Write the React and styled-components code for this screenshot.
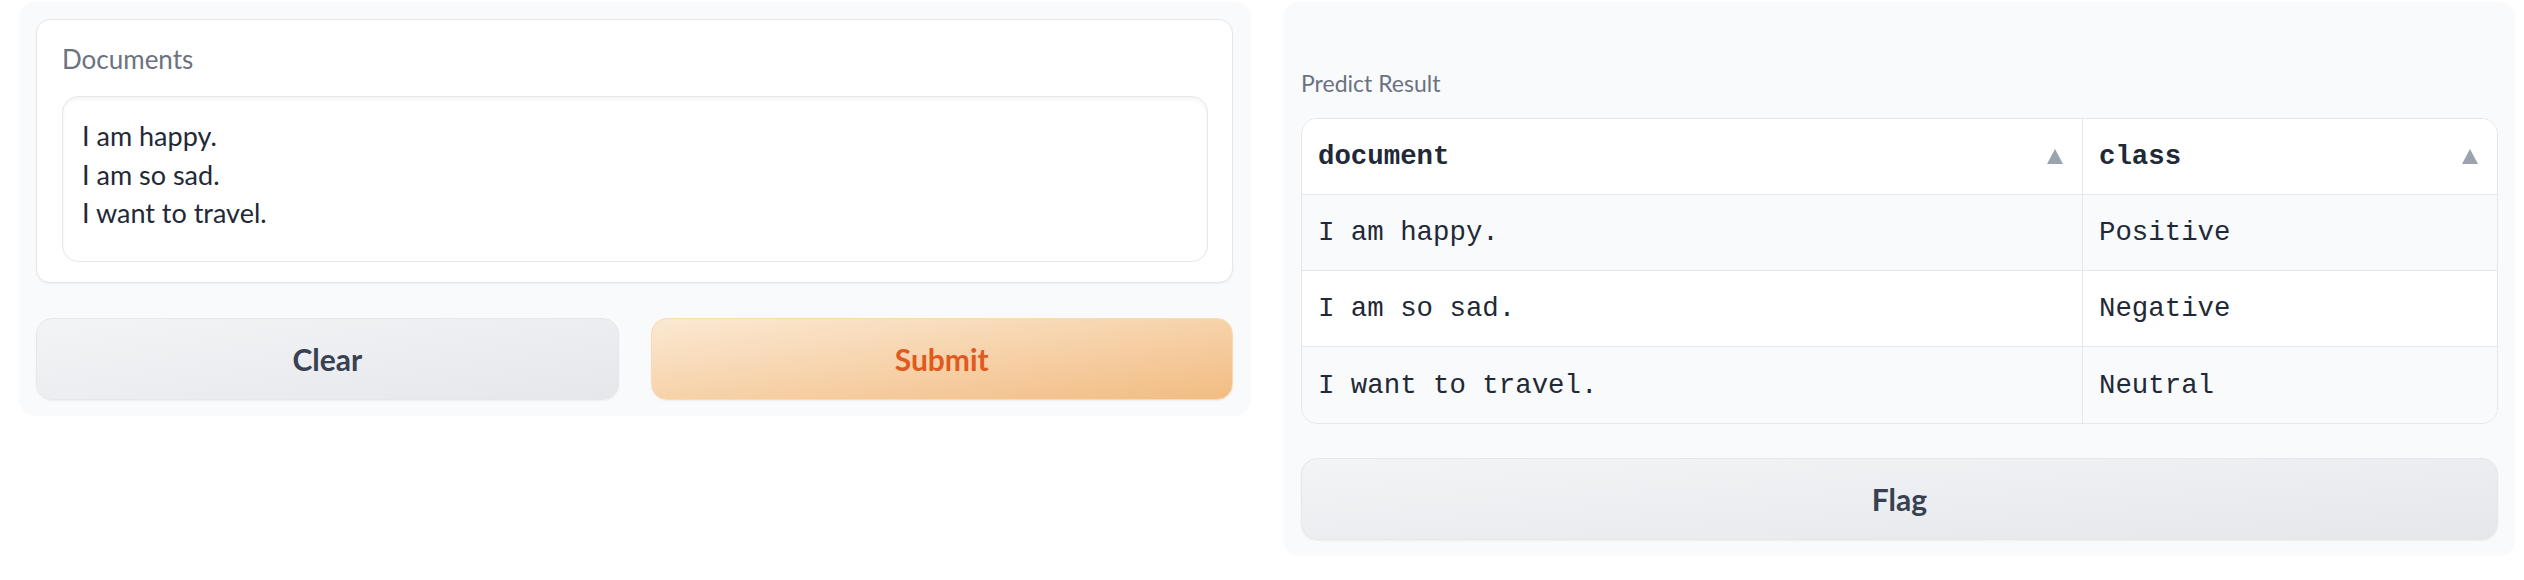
import React from 'react'
import styled, { createGlobalStyle } from 'styled-components'

const GlobalStyle = createGlobalStyle`
  html, body {
    margin: 0;
    padding: 0;
    background: #ffffff;
  }
  body {
    font-family: 'Lato', 'Liberation Sans', sans-serif;
  }
  * {
    box-sizing: border-box;
  }
`

const Page = styled.div`
  display: flex;
  align-items: flex-start;
  gap: 32px;
  padding: 2px 9px 0 19px;
`

const Panel = styled.div`
  flex: 1;
  min-width: 0;
  background: #f9fafb;
  border-radius: 16px;
  display: flex;
  flex-direction: column;
  padding: ${(p) => p.$pad};
`

const Card = styled.div`
  background: #ffffff;
  border: 1px solid #e5e7eb;
  border-radius: 14px;
  box-shadow: 0 1px 2px rgba(0, 0, 0, 0.05);
  padding: 23px 24px 20px 25px;
  display: flex;
  flex-direction: column;
`

const Label = styled.span`
  display: block;
  color: #6b7280;
  font-size: ${(p) => p.$size || 26}px;
  line-height: ${(p) => p.$lh || 32}px;
  margin: ${(p) => p.$margin || '0 0 21px'};
`

const TextArea = styled.textarea`
  display: block;
  width: 100%;
  height: 166px;
  margin: 0;
  padding: 20px 19px;
  border: 1px solid #e5e7eb;
  border-radius: 16px;
  box-shadow: inset 0 2px 4px rgba(0, 0, 0, 0.05);
  background: #ffffff;
  color: #1f2937;
  font-family: 'Lato', 'Liberation Sans', sans-serif;
  font-size: 27px;
  line-height: 38.7px;
  resize: none;
  overflow: hidden;
  outline: none;
`

const ButtonRow = styled.div`
  display: grid;
  grid-template-columns: 1fr 1fr;
  gap: 32px;
  margin-top: 35px;
`

const Button = styled.button`
  height: 82px;
  width: 100%;
  margin-top: ${(p) => p.$top || 0}px;
  border-radius: 16px;
  font-family: 'Lato', 'Liberation Sans', sans-serif;
  font-weight: 700;
  font-size: 30px;
  box-shadow: 0 1px 2px rgba(0, 0, 0, 0.05);
  cursor: pointer;
  border: 1px solid ${(p) => (p.$primary ? '#fdd9ae' : '#e5e7eb')};
  color: ${(p) => (p.$primary ? '#df5a1f' : '#374151')};
  background: ${(p) =>
    p.$primary
      ? 'linear-gradient(to bottom right, #fbe9d3, #f2bc82)'
      : 'linear-gradient(to bottom right, #f3f4f6, #e5e7eb)'};
`

const Table = styled.div`
  display: grid;
  grid-template-columns: 781px 1fr;
  border: 1px solid #e5e7eb;
  border-radius: 16px;
  overflow: hidden;
  font-family: 'Liberation Mono', 'DejaVu Sans Mono', monospace;
  font-size: 27.4px;
  color: #1f2937;
`

const Cell = styled.div`
  height: 76px;
  display: flex;
  align-items: center;
  justify-content: space-between;
  padding: 0 19px 0 16px;
  border-bottom: ${(p) => (p.$last ? 'none' : '1px solid #e5e7eb')};
  border-right: ${(p) => (p.$first ? '1px solid #e5e7eb' : 'none')};
  background: ${(p) => (p.$shade ? '#f9fafb' : '#ffffff')};
  font-weight: ${(p) => (p.$head ? 700 : 400)};
  white-space: pre;
`

const SortArrow = () => (
  <svg width="16" height="15" viewBox="0 0 16 15">
    <polygon points="8,0 16,15 0,15" fill="#9ca3af" />
  </svg>
)

const rows = [
  ['I am happy.', 'Positive'],
  ['I am so sad.', 'Negative'],
  ['I want to travel.', 'Neutral'],
]

const App = () => (
  <>
    <GlobalStyle />
    <Page>
      <Panel $pad="17px 18px 16px 17px">
        <Card>
          <Label>Documents</Label>
          <TextArea
            readOnly
            defaultValue={'I am happy.\nI am so sad.\nI want to travel.'}
          />
        </Card>
        <ButtonRow>
          <Button>Clear</Button>
          <Button $primary>Submit</Button>
        </ButtonRow>
      </Panel>
      <Panel $pad="17px 17px 16px 18px">
        <Label $size={23} $lh={28} $margin="50px 0 21px">
          Predict Result
        </Label>
        <Table>
          <Cell $head $first>
            document
            <SortArrow />
          </Cell>
          <Cell $head>
            class
            <SortArrow />
          </Cell>
          {rows.map(([doc, cls], i) => (
            <React.Fragment key={doc}>
              <Cell $first $shade={i % 2 === 0} $last={i === rows.length - 1}>
                {doc}
              </Cell>
              <Cell $shade={i % 2 === 0} $last={i === rows.length - 1}>
                {cls}
              </Cell>
            </React.Fragment>
          ))}
        </Table>
        <Button $top={34}>Flag</Button>
      </Panel>
    </Page>
  </>
)

export default App
